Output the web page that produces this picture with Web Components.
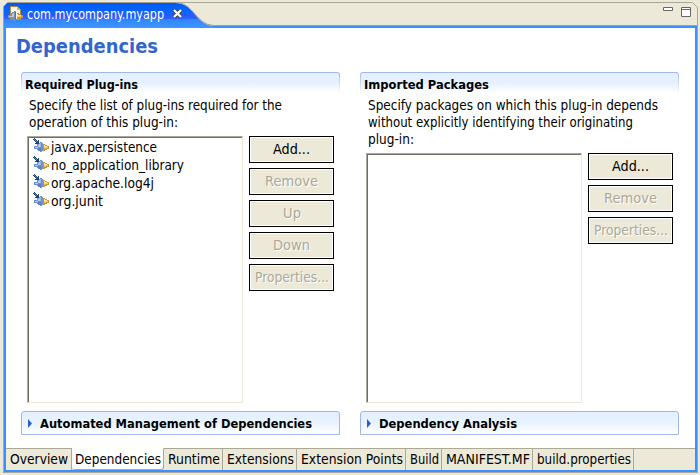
<!DOCTYPE html>
<html lang="en"><head><meta charset="utf-8"><title>com.mycompany.myapp</title>
<style>
html,body{margin:0;width:700px;height:475px;overflow:hidden;background:#ece9d8}
body{font:14px/17px "DejaVu Sans Condensed","DejaVu Sans",sans-serif;color:#000}
</style></head><body>
<editor-window></editor-window>
<script>
const define=(name,html,init)=>customElements.define(name,class extends HTMLElement{
  connectedCallback(){
    if(this.shadowRoot)return;
    this.attachShadow({mode:'open'}).innerHTML=html;
    if(init)init(this,this.shadowRoot);
  }
});

/* Text run scaled to a fixed advance width. */
define('fit-text',`<style>
:host{display:inline-block;white-space:nowrap;font-family:"DejaVu Sans Condensed","DejaVu Sans",sans-serif;font-stretch:condensed;font-size:14px;text-align:left;--dy:0px}
:host([bold]){font-weight:700;font-size:13px;--dy:-1px}
:host([heading]){font-size:19px;line-height:24px;--dy:0px}
span{display:inline-block;transform-origin:0 50%}
</style><span><slot></slot></span>`,(el,root)=>{
  const w=+el.getAttribute('w'),s=root.querySelector('span');
  const own=s.getBoundingClientRect().width;
  el.style.width=w+'px';
  if(own)s.style.transform=`translateY(var(--dy)) scaleX(${w/own})`;
});

define('plugin-icon',`<style>:host{display:block;width:16px;height:16px;flex:none}svg{display:block}</style>
<svg width="16" height="16" shape-rendering="crispEdges">
<path d="M1 8h3V6h1V5h2V4h2v1h1v8H9v1H7v-1H5v-1H4v-1H1z" fill="#6f92cf"/><path d="M2 9h3V7h1V6h1v3H5v1H2z" fill="#b4cef2"/><path d="M7 5h1v4H7z" fill="#9cbbe9"/><path d="M5 10h3v3H6v-1H5z" fill="#5b80c6"/>
<path d="M10 6h2v1h2v1h2v3h-2v1h-2v1h-2z" fill="#cc9433"/><path d="M11 7h1v1h2v1h-3z" fill="#ffe7a2"/><path d="M11 9h4v1h-4z" fill="#fad07a"/><path d="M11 10h2v1h-2z" fill="#efb652"/>
<path d="M0 1h1V0h1v1h1v1h1v1h1V2h1v4H2V5h1V4H2V3H1V2H0z" fill="#1d4678"/><path d="M1 1h1v1h1v1h1v1H3V3H2V2H1z" fill="#5c83ad"/></svg>`);

define('file-icon',`<style>:host{display:block;width:16px;height:16px;flex:none}svg{display:block}</style>
<svg width="16" height="16" shape-rendering="crispEdges">
<path d="M2 0h8v1h1v1h1v1h1v11H2z" fill="#b08a3c"/><path d="M3 1h6v3h3v9H3z" fill="#fffaf0"/><path d="M9 1h1v1h1v1h1v1H9z" fill="#e5b750"/>
<path d="M0 9h3V7h1V6h2V5h2v10H6v-1H4v-1H3v-1H0z" fill="#7b93b8"/><path d="M1 10h3V8h1V7h1v4H1z" fill="#b9cce0"/><path d="M7 6h1v8H7z" fill="#5a7599"/>
<path d="M9 7h2v1h2v1h2v3h-2v1h-2v1H9z" fill="#d89022"/><path d="M9 8h1v1h3v1H9z" fill="#ffe9a8"/><path d="M9 10h4v1H9z" fill="#f8c860"/></svg>`);

define('editor-tab',`<style>
:host{display:block;height:26px;position:relative}
svg.back{position:absolute;inset:0}
.label{position:relative;display:flex;align-items:center;padding:4px 0 0 5px;height:16px;color:#fff}
fit-text{margin-left:3px}.x{margin-left:8px}
.controls{position:absolute;right:7px;top:5px}
</style>
<svg class="back" width="695" height="26"><defs><linearGradient id="g" x2="0" y2="1"><stop offset="0" stop-color="#0059f8"/><stop offset=".42" stop-color="#0b68ff"/><stop offset=".43" stop-color="#2456ff"/><stop offset=".62" stop-color="#2d62ff"/><stop offset=".63" stop-color="#2d86ff"/><stop offset="1" stop-color="#4095ff"/></linearGradient></defs>
<path d="M1 26V4L4 1H173C191 1 192 23 211 24H694V26z" fill="url(#g)"/>
<path d="M211 24H694V26H211z" fill="#3990ff"/>
<path d="M.5 26V4.5L4.5.5H173C191 .5 193 23.5 211 23.5H694" fill="none" stroke="#a6a18e"/>
<path d="M173 .5H689.500L694.500 5.500V26" fill="none" stroke="#aca899"/></svg>
<div class="label"><file-icon></file-icon><fit-text w="137">com.mycompany.myapp</fit-text><svg class="x" width="12" height="12"><path d="M2 2L9 9M9 2L2 9" stroke="#444" stroke-width="4"/><path d="M2 2L9 9M9 2L2 9" stroke="#fff" stroke-width="2.200"/></svg></div>
<svg class="controls" width="28" height="11" fill="#fff" stroke="#666"><path d="M.5.5h9v3h-9zM18.500.5h9v9h-9zM18.500 2.500h9"/></svg>`);

define('form-section',`<style>
:host{display:block;box-sizing:border-box;width:319px;height:332px}
header{box-sizing:border-box;height:22px;padding:5px 0 0 4px;border-radius:3px 3px 0 0;background:linear-gradient(#9db7e8,#fff);overflow:hidden;position:relative;isolation:isolate}
header::before{content:"";position:absolute;z-index:-1;inset:1px 1px 0;border-radius:2px 2px 0 0;background:linear-gradient(#e5f0ff 45%,#fff 95%)}
p{margin:3px 0 0 8px;height:34px}:host([lines="3"]) p{height:51px}
::slotted([slot=text]){display:block;height:17px}
.body{display:flex;gap:6px;margin:5px 0 0 6px;height:267px}:host([lines="3"]) .body{height:250px}
</style><header><slot name="title"></slot></header><p><slot name="text"></slot></p><div class="body"><slot></slot></div>`);

define('list-box',`<style>:host{display:block;box-sizing:border-box;width:216px;height:100%;background:#fff;border:1px solid #aca899;border-right-color:#ece9d8;border-bottom-color:#ece9d8;box-shadow:inset 1px 1px #716f64;padding:2px 0 0 5px}</style><slot></slot>`);
define('list-item',`<style>:host{display:flex;height:18px;align-items:flex-start;gap:2px}plugin-icon{margin-top:-1px}</style><plugin-icon></plugin-icon><div><slot></slot></div>`);
define('button-column',`<style>:host{display:flex;flex-direction:column;gap:5px;width:85px}</style><slot></slot>`);
define('push-button',`<style>:host{display:block;box-sizing:border-box;height:27px;border:1px solid #000;background:#ece9d8;box-shadow:inset 0 0 0 1px #fff;text-align:center;padding-top:4px}
:host([disabled]){color:#aca899;text-shadow:1px 1px #fff}</style><slot></slot>`);
define('twistie-bar',`<style>:host{display:flex;box-sizing:border-box;width:319px;height:24px;border:1px solid #9db7e8;border-radius:3px 3px 0 0;background:linear-gradient(#e3efff,#e9f3ff 50%,#fff);padding:4px 0 0 6px;gap:8px}svg{margin-top:3px}</style><svg width="4" height="9"><path d="M0 0L4 4.500L0 9z" fill="#2d5dcc"/></svg><slot></slot>`);
define('page-tab',`<style>:host{display:block;box-sizing:border-box;height:22px;border:solid #aca899;border-width:1px 1px 0 0;padding:2px 0 0 4px}
:host([active]){background:#fff;border-top-color:#fff;border-bottom:1px solid #aca899;border-radius:0 0 3px 3px;padding-left:3px}</style><slot></slot>`);

define('editor-window',`<style>
:host{display:block;padding:2px 2px 0 3px}
main{box-sizing:border-box;width:695px;height:445px;border:solid #aca899;border-width:0 1px 1px;background:#3990ff;padding:0 2px 2px 2px}
.page{box-sizing:border-box;background:#fff;height:442px;padding-top:6px;display:flex;flex-direction:column}
h1{margin:0 0 0 10px;height:38px;color:#3366cc;font-size:19px}
.grid{display:grid;grid-template-columns:319px 319px;column-gap:20px;row-gap:7px;margin-left:15px}
nav{display:flex;margin-top:13px;background:#ece9d8}
i{flex:1;border-top:1px solid #aca899}
</style>
<editor-tab></editor-tab>
<main><div class="page">
<h1><fit-text bold heading w="142">Dependencies</fit-text></h1>
<div class="grid">
<form-section><fit-text slot="title" bold w="113">Required Plug-ins</fit-text><fit-text slot="text" w="253">Specify the list of plug-ins required for the</fit-text><fit-text slot="text" w="149">operation of this plug-in:</fit-text>
<list-box><list-item><fit-text w="106">javax.persistence</fit-text></list-item><list-item><fit-text w="133">no_application_library</fit-text></list-item><list-item><fit-text w="103">org.apache.log4j</fit-text></list-item><list-item><fit-text w="52">org.junit</fit-text></list-item></list-box>
<button-column><push-button><fit-text w="37">Add...</fit-text></push-button><push-button disabled><fit-text w="53">Remove</fit-text></push-button><push-button disabled><fit-text w="18">Up</fit-text></push-button><push-button disabled><fit-text w="37">Down</fit-text></push-button><push-button disabled><fit-text w="74">Properties...</fit-text></push-button></button-column></form-section>
<form-section lines="3"><fit-text slot="title" bold w="125">Imported Packages</fit-text><fit-text slot="text" w="290">Specify packages on which this plug-in depends</fit-text><fit-text slot="text" w="265">without explicitly identifying their originating</fit-text><fit-text slot="text" w="46">plug-in:</fit-text>
<list-box></list-box>
<button-column><push-button><fit-text w="37">Add...</fit-text></push-button><push-button disabled><fit-text w="53">Remove</fit-text></push-button><push-button disabled><fit-text w="74">Properties...</fit-text></push-button></button-column></form-section>
<twistie-bar><fit-text bold w="272">Automated Management of Dependencies</fit-text></twistie-bar>
<twistie-bar><fit-text bold w="138">Dependency Analysis</fit-text></twistie-bar>
</div>
<nav><page-tab style="width:66px"><fit-text w="58">Overview</fit-text></page-tab><page-tab active style="width:92px"><fit-text w="86">Dependencies</fit-text></page-tab><page-tab style="width:59px"><fit-text w="52">Runtime</fit-text></page-tab><page-tab style="width:74px"><fit-text w="67">Extensions</fit-text></page-tab><page-tab style="width:109px"><fit-text w="102">Extension Points</fit-text></page-tab><page-tab style="width:36px"><fit-text w="29">Build</fit-text></page-tab><page-tab style="width:91px"><fit-text w="84">MANIFEST.MF</fit-text></page-tab><page-tab style="width:101px"><fit-text w="94">build.properties</fit-text></page-tab><i></i></nav>
</div></main>`);
</script></body></html>
